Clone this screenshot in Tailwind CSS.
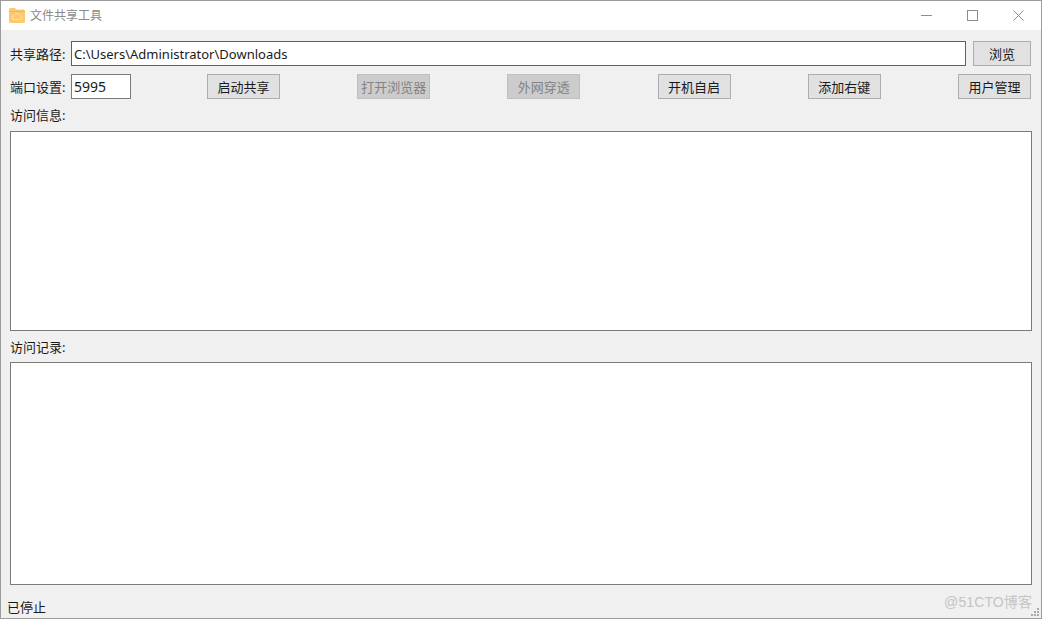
<!DOCTYPE html>
<html lang="zh-CN">
<head>
<meta charset="utf-8">
<script src="https://cdn.jsdelivr.net/npm/@tailwindcss/browser@4"></script>
<title>文件共享工具</title>
</head>
<body class="m-0 overflow-hidden bg-[#f0f0f0]">
<div class="relative flex h-[619px] w-[1042px] flex-col overflow-hidden border border-[#9c9c9c] bg-[#f0f0f0] text-[13px] leading-[20px] text-[#1a1a1a] [font-family:'Noto_Sans','Noto_Sans_CJK_SC',sans-serif]">
  <header class="flex h-[29px] shrink-0 items-center bg-white pl-[8px]">
    <svg width="16" height="15" viewBox="0 0 16 15" class="mr-[5px]">
      <path d="M0 1.5 Q0 0 1.5 0 H6 L7.5 1.5 H14.5 Q16 1.5 16 3 V13.5 Q16 15 14.5 15 H1.5 Q0 15 0 13.5 Z" fill="#fdc96f"/>
      <path d="M0 3.5 H16" stroke="#f6b64f" stroke-width="1"/>
      <path d="M5 11.5 Q3 11.5 3 9.6 Q3 8 4.8 7.9 Q5.5 5.7 8 5.7 Q10.5 5.7 11.2 7.9 Q13 8 13 9.7 Q13 11.5 11 11.5 Z" fill="none" stroke="#fee0a8" stroke-width="1"/>
    </svg>
    <span class="text-[12px] text-[#8a8a8a]">文件共享工具</span>
    <div class="ml-auto flex items-center">
      <div class="flex h-[29px] w-[46px] items-center justify-center"><svg width="11" height="11" viewBox="0 0 11 11"><path d="M0 5.5H11" stroke="#8c8c8c"/></svg></div>
      <div class="flex h-[29px] w-[46px] items-center justify-center"><svg width="11" height="11" viewBox="0 0 11 11"><rect x="0.5" y="0.5" width="10" height="10" fill="none" stroke="#8c8c8c"/></svg></div>
      <div class="flex h-[29px] w-[46px] items-center justify-center"><svg width="11" height="11" viewBox="0 0 11 11"><path d="M0.5 0.5L10.5 10.5M10.5 0.5L0.5 10.5" stroke="#8c8c8c"/></svg></div>
    </div>
  </header>

  <main class="flex min-h-0 flex-1 flex-col px-[9px] pt-[11px]">
    <div class="flex h-[25px] items-center">
      <label class="w-[61px] shrink-0 whitespace-nowrap">共享路径:</label>
      <input value="C:\Users\Administrator\Downloads" class="h-[25px] min-w-0 flex-1 border border-[#0078d7] bg-white px-[2px] text-[#1a1a1a] outline-none">
      <button class="ml-[7px] h-[25px] w-[58px] shrink-0 border border-[#adadad] bg-[#e1e1e1]">浏览</button>
      <div class="w-[1px] shrink-0"></div>
    </div>
    <div class="mt-[8px] flex h-[25px] items-center">
      <label class="w-[61px] shrink-0 whitespace-nowrap">端口设置:</label>
      <input value="5995" class="h-[25px] w-[60px] shrink-0 border border-[#7a7a7a] bg-white px-[2px] text-[14px] outline-none">
      <div class="mr-[1px] flex flex-1 justify-between pl-[76px]">
        <button class="h-[25px] w-[73px] border border-[#adadad] bg-[#e1e1e1]">启动共享</button>
        <button disabled class="h-[25px] w-[73px] border border-[#bfbfbf] bg-[#cccccc] text-[#838383]">打开浏览器</button>
        <button disabled class="h-[25px] w-[73px] border border-[#bfbfbf] bg-[#cccccc] text-[#838383]">外网穿透</button>
        <button class="h-[25px] w-[73px] border border-[#adadad] bg-[#e1e1e1]">开机自启</button>
        <button class="h-[25px] w-[73px] border border-[#adadad] bg-[#e1e1e1]">添加右键</button>
        <button class="h-[25px] w-[73px] border border-[#adadad] bg-[#e1e1e1]">用户管理</button>
      </div>
    </div>
    <div class="mt-[6px] h-[20px]">访问信息:</div>
    <div class="mt-[6px] h-[200px] border border-[#7a7a7a] bg-white"></div>
    <div class="mt-[6px] h-[20px]">访问记录:</div>
    <div class="mt-[5px] h-[223px] border border-[#7a7a7a] bg-white"></div>
  </main>

  <footer class="flex h-[21px] shrink-0 items-center pb-[1px] pl-[6px]">已停止</footer>

  <span class="absolute bottom-[6px] right-[9px] text-[14px] tracking-[0.1px] text-[#c4c4c4] [font-family:'Liberation_Sans','Noto_Sans_CJK_SC',sans-serif]">@51CTO博客</span>
  <svg width="10" height="10" viewBox="0 0 10 10" class="absolute bottom-[1px] right-[1px]" fill="#a8a8a8">
    <rect x="7" y="1" width="2" height="2"/><rect x="4" y="4" width="2" height="2"/><rect x="7" y="4" width="2" height="2"/><rect x="1" y="7" width="2" height="2"/><rect x="4" y="7" width="2" height="2"/><rect x="7" y="7" width="2" height="2"/>
  </svg>
</div>
</body>
</html>
